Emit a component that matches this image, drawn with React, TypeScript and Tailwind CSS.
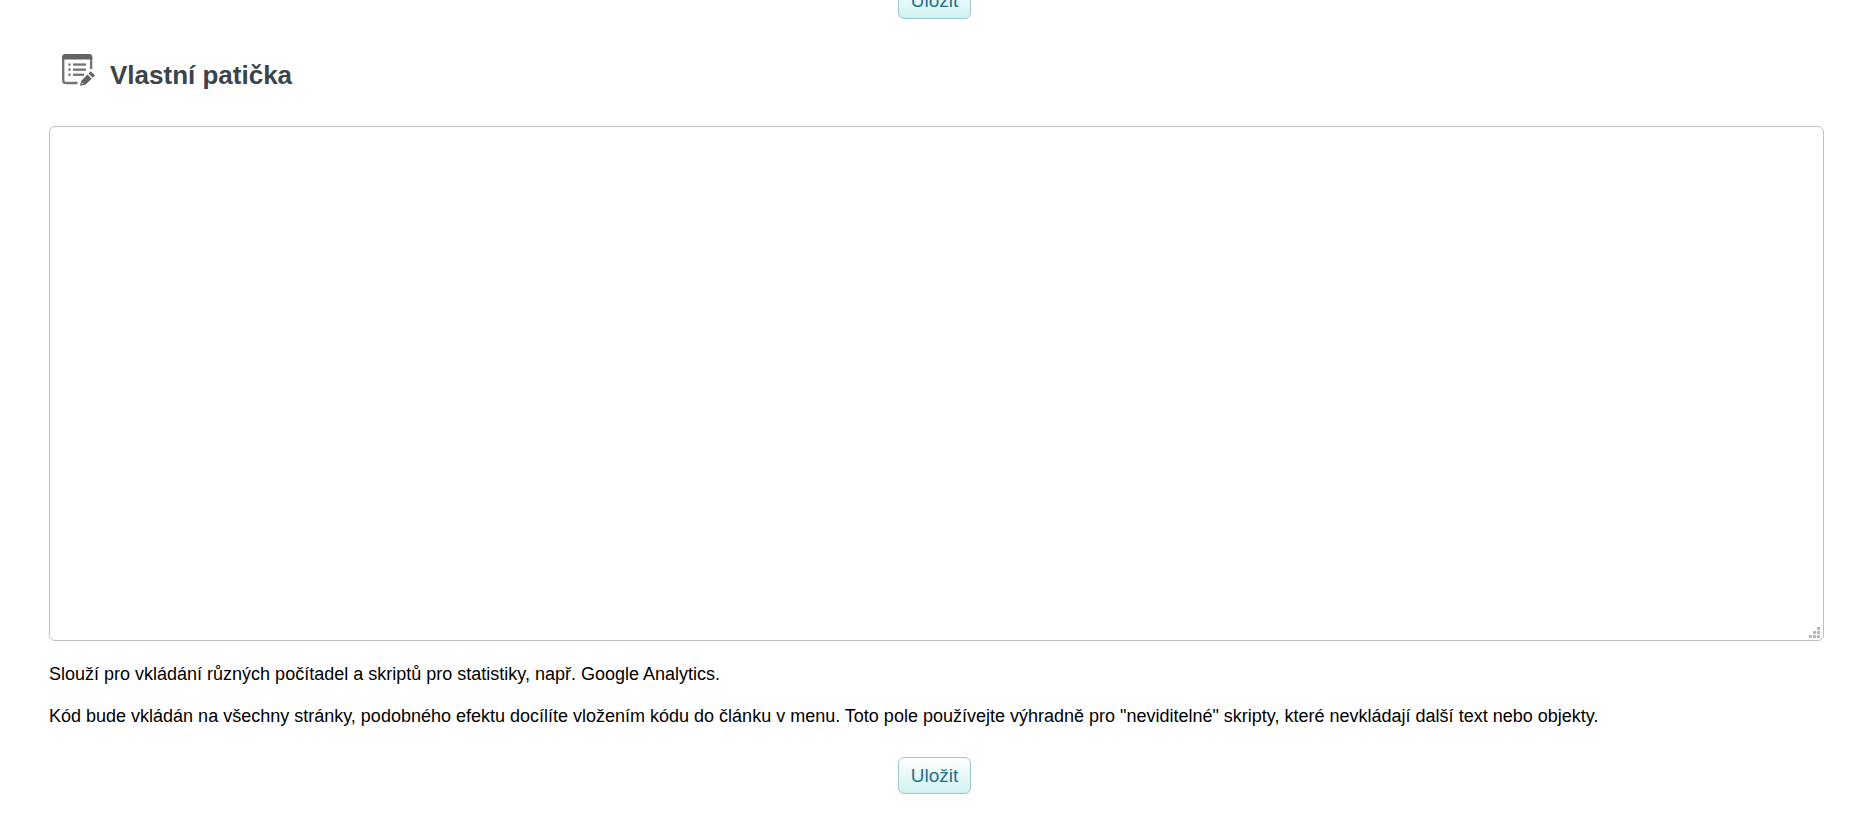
import React, { useState } from "react";

interface SaveButtonProps {
  onClick?: () => void;
}

const SaveButton: React.FC<SaveButtonProps> = ({ onClick }) => (
  <button
    type="button"
    onClick={onClick}
    className="h-[37px] px-3 rounded-md border border-[#9cc9ce] bg-linear-to-b from-white to-[#cff2f1] text-[19px] leading-6 text-[#22708f] hover:to-[#b9eae9]"
  >
    Uložit
  </button>
);

const FooterIcon: React.FC = () => (
  <svg viewBox="0 0 34 34" className="w-[34px] h-[34px]" aria-hidden="true">
    <path
      d="M16.500 30H5Q2.200 30 2.200 27.200V5Q2.200 2.200 5 2.200H27.300Q30.100 2.200 30.100 5V16"
      fill="none"
      stroke="#747474"
      strokeWidth="2.4"
    />
    <path d="M1 6.500V4.500Q1 1 4.500 1H27.800Q31.300 1 31.300 4.500V6.500Z" fill="#636363" />
    <g fill="#747474">
      <rect x="7.300" y="10.400" width="2.300" height="2.300" />
      <rect x="7.300" y="15.500" width="2.300" height="2.300" />
      <rect x="7.300" y="20.600" width="2.300" height="2.300" />
      <rect x="12" y="10.400" width="13" height="2.300" />
      <rect x="12" y="15.500" width="13" height="2.300" />
      <rect x="12" y="20.600" width="11" height="2.300" />
    </g>
    <path d="M19 32.800L20.300 27.800L26.500 21.500L30.800 25.800L24.300 31.700Z" fill="#636363" />
    <path d="M27.500 20.500L29.700 18.300L34 22.600L31.800 24.800Z" fill="#636363" />
    <path d="M21 29.800L22.200 31" stroke="#fff" strokeWidth="1" />
  </svg>
);

const ResizeGrip: React.FC = () => (
  <svg
    viewBox="0 0 11 11"
    className="absolute right-[4px] bottom-[3px] w-[11px] h-[11px] pointer-events-none"
    fill="#b8b8b8"
    aria-hidden="true"
  >
    <rect x="8" y="0" width="3" height="3" />
    <rect x="4" y="4" width="3" height="3" />
    <rect x="8" y="4" width="3" height="3" />
    <rect x="0" y="8" width="3" height="3" />
    <rect x="4" y="8" width="3" height="3" />
    <rect x="8" y="8" width="3" height="3" />
  </svg>
);

const App: React.FC = () => {
  const [footer, setFooter] = useState<string>("");

  return (
    <div className="overflow-hidden bg-white text-black font-['Liberation_Sans',Arial,sans-serif]">
      <main className="flex flex-col pl-[49px] pr-7">
        <div className="-mt-[18px] flex justify-center pr-1">
          <SaveButton />
        </div>

        <div className="mt-[34px] pl-3 flex items-start gap-[15px]">
          <FooterIcon />
          <h2 className="mt-[6px] text-[26px] leading-8 font-bold text-[#39444b]">
            <label htmlFor="custom-footer">Vlastní patička</label>
          </h2>
        </div>

        <div className="relative mt-[35px]">
          <textarea
            id="custom-footer"
            value={footer}
            onChange={(e) => setFooter(e.target.value)}
            className="block w-full h-[515px] p-2 rounded-md border border-[#c0c0c0] text-lg resize-none outline-none"
          />
          <ResizeGrip />
        </div>

        <p className="mt-[21px] text-lg leading-6">
          Slouží pro vkládání různých počítadel a skriptů pro statistiky, např.
          Google Analytics.
        </p>
        <p className="mt-[18px] text-lg leading-6">
          Kód bude vkládán na všechny stránky, podobného efektu docílíte
          vložením kódu do článku v menu. Toto pole používejte výhradně pro
          "neviditelné" skripty, které nevkládají další text nebo objekty.
        </p>

        <div className="mt-[29px] pb-7 flex justify-center pr-1">
          <SaveButton />
        </div>
      </main>
    </div>
  );
};

export default App;
